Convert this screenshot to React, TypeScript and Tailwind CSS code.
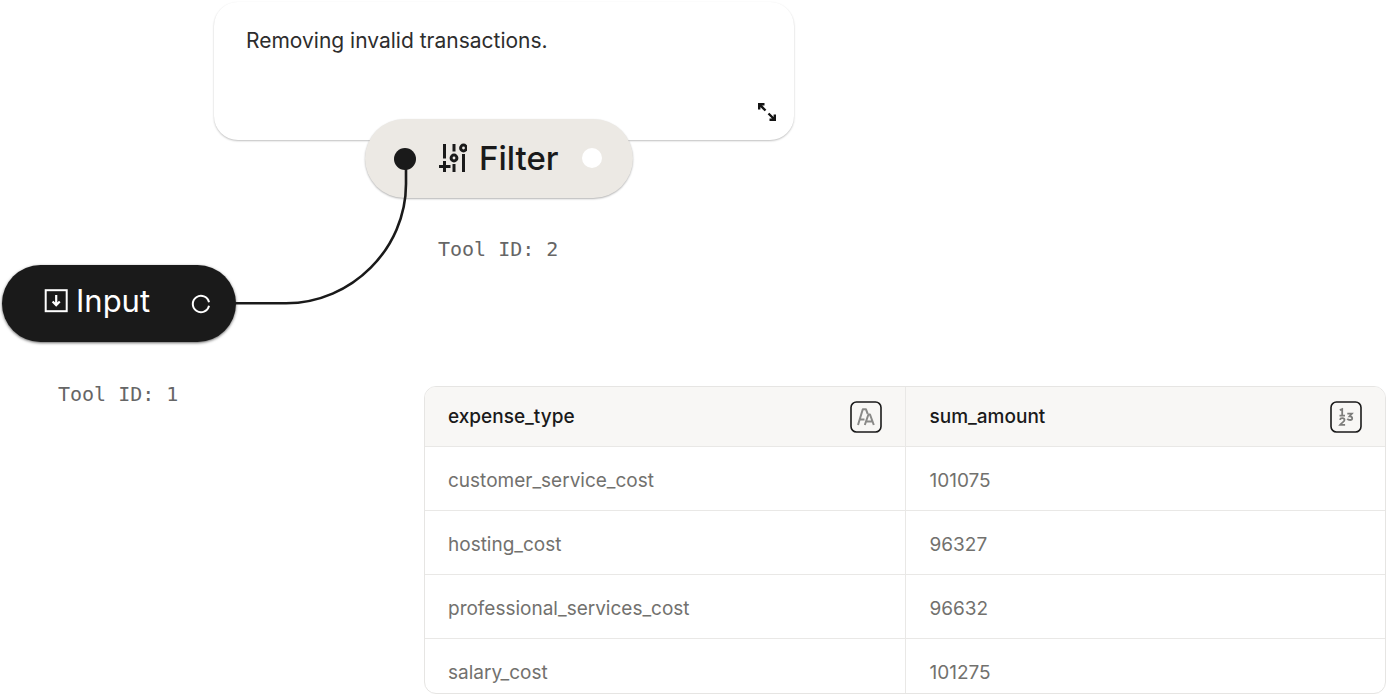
import { useState } from "react";

const rows = [
  { type: "customer_service_cost", amount: 101075 },
  { type: "hosting_cost", amount: 96327 },
  { type: "professional_services_cost", amount: 96632 },
  { type: "salary_cost", amount: 101275 },
];

function InputIcon() {
  return (
    <svg
      className="size-6 shrink-0"
      viewBox="0 0 24 24"
      fill="none"
      stroke="currentColor"
      aria-hidden="true"
    >
      <rect x="1.7" y="1.2" width="21" height="21" strokeWidth="2" />
      <path d="M12.2 6v9.5M8.6 12.5l3.6 3.6 3.6-3.6" strokeWidth="2.2" />
    </svg>
  );
}

function FilterIcon() {
  return (
    <svg
      className="h-[30px] w-7 shrink-0"
      viewBox="0 0 28 30"
      fill="none"
      stroke="currentColor"
      strokeWidth="3"
      aria-hidden="true"
    >
      <path d="M5.5 1v14.5M5.5 18v11M0 23.5h11.5" />
      <path d="M15 1v7.5M15 21v8" />
      <circle cx="15" cy="15" r="2.9" />
      <path d="M24.5 11v18" />
      <circle cx="24.5" cy="5" r="2.9" />
    </svg>
  );
}

function OutputRing() {
  return (
    <svg
      className="ml-auto size-5"
      viewBox="0 0 20 20"
      fill="none"
      stroke="currentColor"
      strokeWidth="2"
      aria-hidden="true"
    >
      <path d="M18 8.2A8.2 8.2 0 1 0 18 11.8" />
    </svg>
  );
}

function ExpandIcon() {
  return (
    <svg
      className="size-5"
      viewBox="0 0 20 20"
      fill="none"
      stroke="currentColor"
      strokeWidth="2.4"
      aria-hidden="true"
    >
      <path d="M2.2 7.5V2.2h5.3M2.5 2.5l6 6M17.8 12.5v5.3h-5.3M17.5 17.5l-6-6" />
    </svg>
  );
}

function TextTypeIcon() {
  return (
    <svg
      className="size-8"
      viewBox="0 0 32 32"
      fill="none"
      aria-label="Text column"
      role="img"
    >
      <rect x="1" y="1" width="30" height="30" rx="5.5" stroke="#1a1a1a" strokeWidth="1.6" />
      <g stroke="#8a8a88" strokeWidth="2" strokeLinejoin="round">
        <path d="M8 24l4.8-15.7h3.2l1.7 4.5M10 18.5h4.5" />
        <path d="M14.8 24l3.6-10.5h1.6L23.8 24M16.1 20.5h6.3" />
      </g>
    </svg>
  );
}

function NumberTypeIcon() {
  return (
    <svg
      className="size-8"
      viewBox="0 0 32 32"
      fill="none"
      aria-label="Number column"
      role="img"
    >
      <rect x="1" y="1" width="30" height="30" rx="5.5" stroke="#1a1a1a" strokeWidth="1.6" />
      <g stroke="#7d7d7b" strokeWidth="1.8">
        <path d="M9.8 9.2l2.4-1v6.3M9.5 14.6h5.5" />
        <path d="M10 18.8c.3-2.2 4.5-2.1 4.5.2 0 1.7-2.6 2.6-4.4 4.8h5" />
        <path d="M17.3 12.6h4.6l-2.4 2.8c3.8 0 3.2 3.6.6 3.6-1.4 0-2.3-.5-2.8-1.3" />
      </g>
    </svg>
  );
}

function Connector() {
  return (
    <svg
      className="pointer-events-none absolute top-[140px] left-[230px] h-[170px] w-[190px]"
      viewBox="0 0 190 170"
      fill="none"
      aria-hidden="true"
    >
      <path
        d="M4 163.3H56C122 163.3 176 108 176 44V20"
        stroke="#1a1a1a"
        strokeWidth="2.6"
      />
      <circle cx="175" cy="19" r="11" fill="#1a1a1a" />
    </svg>
  );
}

function Canvas() {
  const [note, setNote] = useState("Removing invalid transactions.");

  return (
    <section className="relative h-[386px]">
      <div className="absolute top-0.5 left-[214px] h-[138px] w-[580px] rounded-3xl bg-white shadow-[0_1px_2px_rgba(0,0,0,0.25)]">
        <input
          aria-label="Annotation"
          value={note}
          onChange={(e) => setNote(e.target.value)}
          className="mt-5 ml-8 h-9 w-[420px] bg-transparent text-[21px] text-[#2d2d2d] outline-none"
        />
        <button
          type="button"
          aria-label="Expand"
          className="absolute right-[17px] bottom-[18px] text-[#141414]"
        >
          <ExpandIcon />
        </button>
      </div>

      <div className="absolute top-[119px] left-[365px] flex h-[79px] w-[268px] items-center rounded-full bg-[#ece9e4] pr-[31px] pb-0.5 pl-[74px] text-[#1a1a1a] shadow-[0_1px_2px_rgba(0,0,0,0.3)]">
        <FilterIcon />
        <span className="ml-3 text-[33px] leading-10 font-medium">Filter</span>
        <span className="ml-auto size-5 rounded-full bg-white" />
      </div>
      <p className="absolute top-[235px] left-[438px] font-['DejaVu_Sans_Mono',monospace] text-xl text-[#666]">
        Tool ID: 2
      </p>

      <div className="absolute top-[265px] left-0.5 flex h-[77px] w-[234px] items-center rounded-full bg-[#1a1a1a] pr-[25px] pl-[42px] text-white shadow-[0_1px_3px_rgba(0,0,0,0.6)]">
        <div className="flex items-center gap-2 pb-1.5">
          <InputIcon />
          <span className="text-[31px] leading-10">Input</span>
        </div>
        <OutputRing />
      </div>
      <p className="absolute top-[380px] left-[58px] font-['DejaVu_Sans_Mono',monospace] text-xl text-[#666]">
        Tool ID: 1
      </p>

      <Connector />
    </section>
  );
}

function ResultTable() {
  return (
    <div className="ml-[424px] overflow-hidden rounded-xl border border-[#e6e5e3]">
      <table className="w-full table-fixed border-collapse text-left text-[19px]">
        <thead className="bg-[#f8f7f5] text-[#1a1a1a]">
          <tr className="border-b border-[#e9e8e6]">
            <th scope="col" className="border-r border-[#e9e8e6] px-[23px] font-medium">
              <div className="flex h-[59px] items-center justify-between">
                <span className="pt-0.5">expense_type</span>
                <TextTypeIcon />
              </div>
            </th>
            <th scope="col" className="pr-[23px] pl-6 font-medium">
              <div className="flex h-[59px] items-center justify-between">
                <span className="pt-0.5">sum_amount</span>
                <NumberTypeIcon />
              </div>
            </th>
          </tr>
        </thead>
        <tbody className="text-[#72716e]">
          {rows.map((row) => (
            <tr key={row.type} className="group border-b border-[#e9e8e6] last:border-b-0">
              <td className="border-r border-[#e9e8e6] px-[23px] pt-5 pb-[15px] leading-7 group-last:pb-1.5">
                {row.type}
              </td>
              <td className="px-6 pt-5 pb-[15px] leading-7 group-last:pb-1.5">{row.amount}</td>
            </tr>
          ))}
        </tbody>
      </table>
    </div>
  );
}

export default function App() {
  return (
    <main className="min-h-screen bg-white font-['Inter',sans-serif]">
      <Canvas />
      <ResultTable />
    </main>
  );
}
